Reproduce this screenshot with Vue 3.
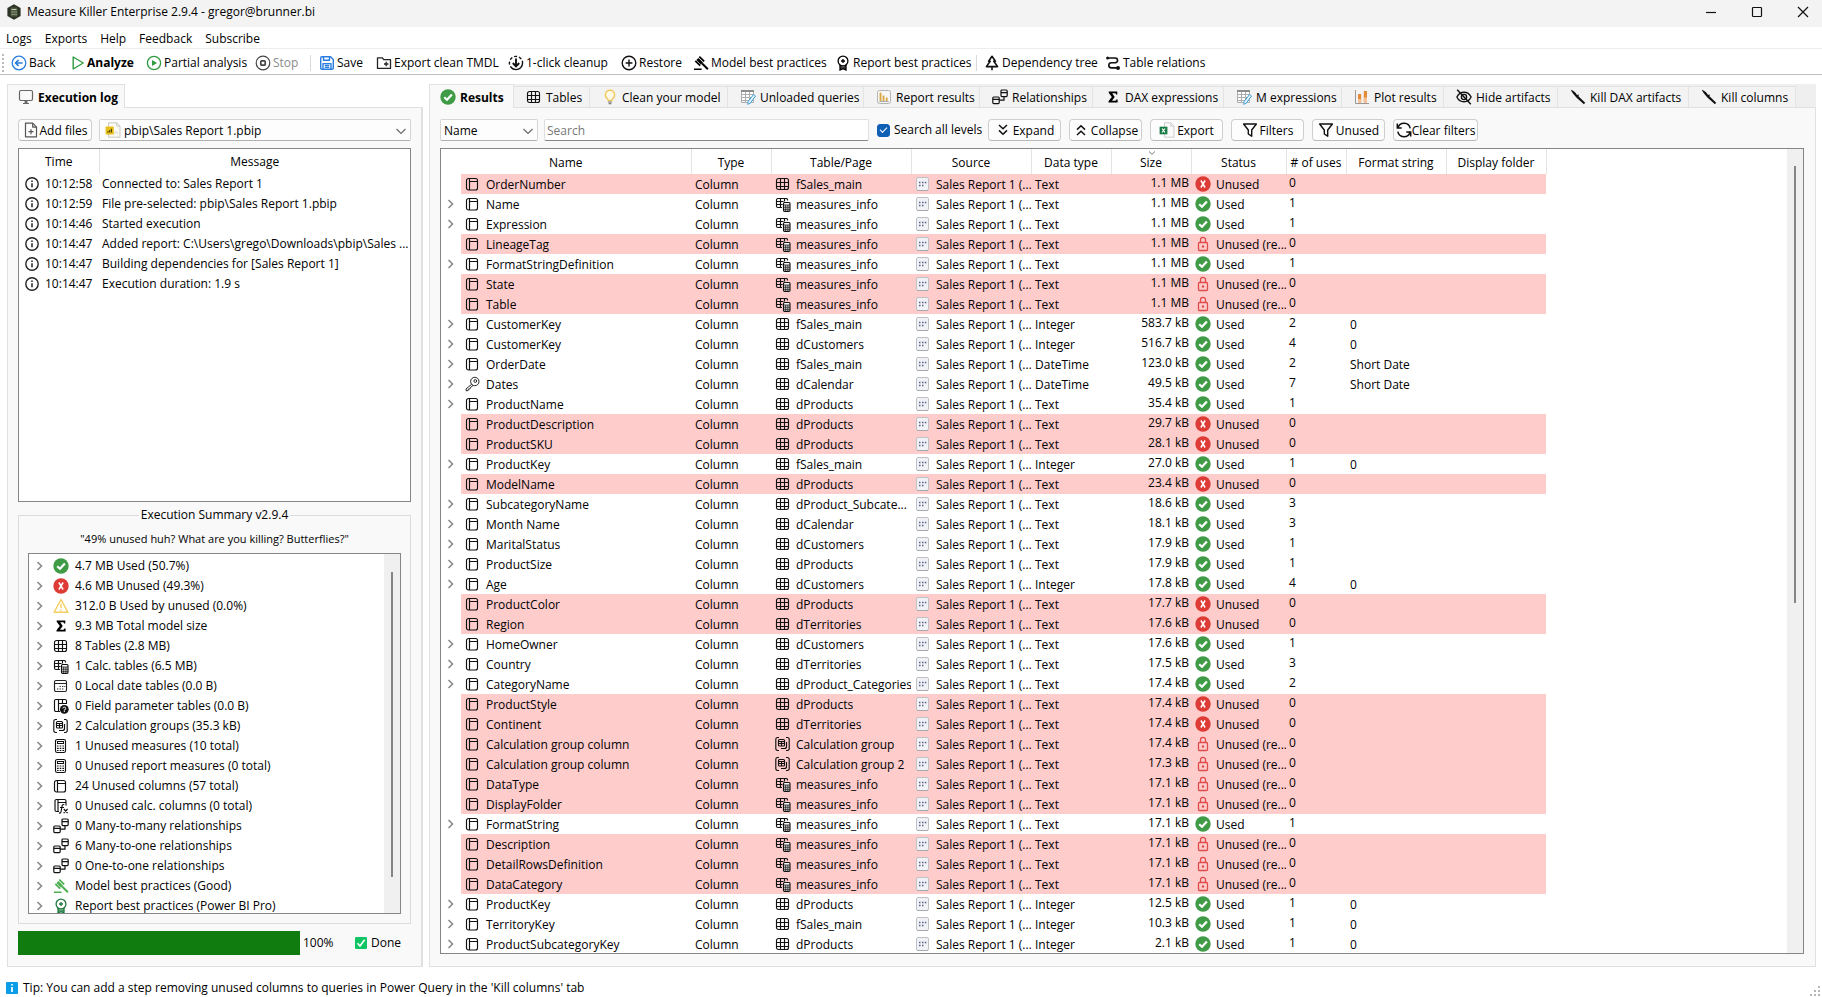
<script setup>
import { ref } from 'vue'

const menus = ['Logs', 'Exports', 'Help', 'Feedback', 'Subscribe']

const tools = [
  { id: 'back', label: 'Back' },
  { id: 'play', label: 'Analyze', bold: true },
  { id: 'playc', label: 'Partial analysis' },
  { id: 'stop', label: 'Stop', off: true },
  { id: 'save', label: 'Save', sep: true },
  { id: 'folder', label: 'Export clean TMDL' },
  { id: 'clean', label: '1-click cleanup' },
  { id: 'plus', label: 'Restore' },
  { id: 'gavel', label: 'Model best practices' },
  { id: 'badge', label: 'Report best practices' },
  { id: 'pine', label: 'Dependency tree', sep: true },
  { id: 'route', label: 'Table relations' }
]

const tabs = [
  ['ok', 'Results'], ['table', 'Tables'], ['bulb', 'Clean your model'], ['sheet', 'Unloaded queries'],
  ['chart', 'Report results'], ['rel', 'Relationships'], ['sigma', 'DAX expressions'], ['sheet', 'M expressions'],
  ['plot', 'Plot results'], ['hide', 'Hide artifacts'], ['knife', 'Kill DAX artifacts'], ['knife', 'Kill columns']
]

const log = [
  ['10:12:58', 'Connected to: Sales Report 1'],
  ['10:12:59', 'File pre-selected: pbip\\Sales Report 1.pbip'],
  ['10:14:46', 'Started execution'],
  ['10:14:47', 'Added report: C:\\Users\\grego\\Downloads\\pbip\\Sales ...'],
  ['10:14:47', 'Building dependencies for [Sales Report 1]'],
  ['10:14:47', 'Execution duration: 1.9 s']
]

const summary = [
  ['ok', '4.7 MB Used (50.7%)'],
  ['bad', '4.6 MB Unused (49.3%)'],
  ['warn', '312.0 B Used by unused (0.0%)'],
  ['sigma', '9.3 MB Total model size'],
  ['table', '8 Tables (2.8 MB)'],
  ['calctable', '1 Calc. tables (6.5 MB)'],
  ['date', '0 Local date tables (0.0 B)'],
  ['param', '0 Field parameter tables (0.0 B)'],
  ['group', '2 Calculation groups (35.3 kB)'],
  ['calc', '1 Unused measures (10 total)'],
  ['calc', '0 Unused report measures (0 total)'],
  ['column', '24 Unused columns (57 total)'],
  ['fx', '0 Unused calc. columns (0 total)'],
  ['rel', '0 Many-to-many relationships'],
  ['rel', '6 Many-to-one relationships'],
  ['rel', '0 One-to-one relationships'],
  ['gavel', 'Model best practices (Good)', 'lime'],
  ['badge', 'Report best practices (Power BI Pro)', 'forest']
]

const heads = ['Type', 'Table/Page', 'Source', 'Data type', 'Size', 'Status', '# of uses', 'Format string', 'Display folder']

const S = 'fSales_main', M = 'measures_info', C = 'dCustomers', P = 'dProducts', T = 'dTerritories', D = 'dCalendar'
const raw = [
  ['OrderNumber', S, 'Text', '1.1 MB', 'x', 0],
  ['Name', M, 'Text', '1.1 MB', 'u', 1],
  ['Expression', M, 'Text', '1.1 MB', 'u', 1],
  ['LineageTag', M, 'Text', '1.1 MB', 'l', 0],
  ['FormatStringDefinition', M, 'Text', '1.1 MB', 'u', 1],
  ['State', M, 'Text', '1.1 MB', 'l', 0],
  ['Table', M, 'Text', '1.1 MB', 'l', 0],
  ['CustomerKey', S, 'Integer', '583.7 kB', 'u', 2, '0'],
  ['CustomerKey', C, 'Integer', '516.7 kB', 'u', 4, '0'],
  ['OrderDate', S, 'DateTime', '123.0 kB', 'u', 2, 'Short Date'],
  ['Dates', D, 'DateTime', '49.5 kB', 'u', 7, 'Short Date'],
  ['ProductName', P, 'Text', '35.4 kB', 'u', 1],
  ['ProductDescription', P, 'Text', '29.7 kB', 'x', 0],
  ['ProductSKU', P, 'Text', '28.1 kB', 'x', 0],
  ['ProductKey', S, 'Integer', '27.0 kB', 'u', 1, '0'],
  ['ModelName', P, 'Text', '23.4 kB', 'x', 0],
  ['SubcategoryName', 'dProduct_Subcate...', 'Text', '18.6 kB', 'u', 3],
  ['Month Name', D, 'Text', '18.1 kB', 'u', 3],
  ['MaritalStatus', C, 'Text', '17.9 kB', 'u', 1],
  ['ProductSize', P, 'Text', '17.9 kB', 'u', 1],
  ['Age', C, 'Integer', '17.8 kB', 'u', 4, '0'],
  ['ProductColor', P, 'Text', '17.7 kB', 'x', 0],
  ['Region', T, 'Text', '17.6 kB', 'x', 0],
  ['HomeOwner', C, 'Text', '17.6 kB', 'u', 1],
  ['Country', T, 'Text', '17.5 kB', 'u', 3],
  ['CategoryName', 'dProduct_Categories', 'Text', '17.4 kB', 'u', 2],
  ['ProductStyle', P, 'Text', '17.4 kB', 'x', 0],
  ['Continent', T, 'Text', '17.4 kB', 'x', 0],
  ['Calculation group column', 'Calculation group', 'Text', '17.4 kB', 'l', 0],
  ['Calculation group column', 'Calculation group 2', 'Text', '17.3 kB', 'l', 0],
  ['DataType', M, 'Text', '17.1 kB', 'l', 0],
  ['DisplayFolder', M, 'Text', '17.1 kB', 'l', 0],
  ['FormatString', M, 'Text', '17.1 kB', 'u', 1],
  ['Description', M, 'Text', '17.1 kB', 'l', 0],
  ['DetailRowsDefinition', M, 'Text', '17.1 kB', 'l', 0],
  ['DataCategory', M, 'Text', '17.1 kB', 'l', 0],
  ['ProductKey', P, 'Integer', '12.5 kB', 'u', 1, '0'],
  ['TerritoryKey', S, 'Integer', '10.3 kB', 'u', 1, '0'],
  ['ProductSubcategoryKey', P, 'Integer', '2.1 kB', 'u', 1, '0']
]
const statusText = { u: 'Used', x: 'Unused', l: 'Unused (re...' }
const statusIcon = { u: 'ok', x: 'bad', l: 'lock' }
const rows = raw.map(([name, table, type, size, st, uses, fmt]) => ({
  name, table, type, size, uses, fmt: fmt || '',
  used: st === 'u',
  icon: name === 'Dates' ? 'key' : 'column',
  tableIcon: table === M ? 'calctable' : table.startsWith('Calc') ? 'group' : 'table',
  status: statusText[st],
  statusIcon: statusIcon[st]
}))

const search = ref('')
const allLevels = ref(true)
const progress = ref(100)
</script>

<template>
  <div class="window">
    <svg class="defs" aria-hidden="true">
      <symbol id="i-app" viewBox="0 0 16 16"><path d="M8 0.3 14.6 4v8L8 15.7 1.4 12V4z" fill="#2b3326" /><rect x="4.6" y="3.6" width="6.8" height="8.8" rx="1" fill="#4c5a40" /><path d="M5.6 5.5h4.8M5.6 8h1m1 0h1m1 0h1m-5 2.4h1m1 0h1m1 0h1" stroke="#c3cbb0" stroke-width="1" /></symbol>
      <symbol id="i-back" viewBox="0 0 16 16"><g fill="none" stroke="#2b7de0" stroke-width="1.3"><circle cx="8" cy="8" r="6.8" /><path d="M11.6 8H4.8M7.6 5 4.6 8l3 3" stroke-width="1.7" /></g></symbol>
      <symbol id="i-play" viewBox="0 0 16 16"><path d="M3.2 2 13.2 8 3.2 14z" fill="none" stroke="#2f9a3e" stroke-width="1.4" stroke-linejoin="round" /></symbol>
      <symbol id="i-playc" viewBox="0 0 16 16"><circle cx="8" cy="8" r="6.6" fill="none" stroke="#2f9a3e" stroke-width="1.3" /><path d="M6 4.9 11 8 6 11.1z" fill="#2f9a3e" /></symbol>
      <symbol id="i-stop" viewBox="0 0 16 16"><g fill="none" stroke="#444" stroke-width="1.2"><circle cx="8" cy="8" r="6.8" /><rect x="5.8" y="5.8" width="4.4" height="4.4" rx="1" stroke-width="1.7" /></g></symbol>
      <symbol id="i-save" viewBox="0 0 16 16"><g fill="none" stroke="#2b7de0" stroke-width="1.4" stroke-linejoin="round"><path d="M1.7 3a1.2 1.2 0 0 1 1.2-1.2h8.6l2.8 2.8V13a1.2 1.2 0 0 1-1.2 1.2H2.9A1.2 1.2 0 0 1 1.7 13z" /><path d="M4.5 1.8v3.4h6V1.8M4 14.2V8.6h8v5.6M5.8 10.5h4.4M5.8 12.4h4.4" /></g></symbol>
      <symbol id="i-folder" viewBox="0 0 16 16"><path d="M1.5 2.8h4.7l1.6 1.8h6.7v8.8h-13zM8 9h4.4M10.2 6.8v4.4" fill="none" stroke="#222" stroke-width="1.3" stroke-linejoin="round" /></symbol>
      <symbol id="i-clean" viewBox="0 0 16 16"><g fill="none" stroke="#111"><circle cx="8" cy="8" r="6.6" stroke-width="1.4" stroke-dasharray="17 2 3 2 3 2 3 2 3 2 2.5 0" /><path d="M8 3.6v7.6M4.8 8 8 11.4 11.2 8" stroke-width="1.9" /></g></symbol>
      <symbol id="i-plus" viewBox="0 0 16 16"><path d="M8 4.6v6.8M4.6 8h6.8M8 1.2a6.8 6.8 0 1 0 0 13.6A6.8 6.8 0 1 0 8 1.2z" fill="none" stroke="#111" stroke-width="1.4" /></symbol>
      <symbol id="i-gavel" viewBox="0 0 16 16"><g fill="currentColor"><path d="M6.9 1 11.8 5.8 10.6 7 5.7 2.2zM2.9 5.2 7.8 10 6.6 11.2 1.7 6.4z" /><path d="M5.4 2.9 10 7.4 7.9 9.5 3.4 5z" /><path d="M9.8 7.8 15.6 13.6 14.2 15 8.4 9.2zM1 13.4h7.6V15H1z" /></g></symbol>
      <symbol id="i-badge" viewBox="0 0 16 16"><g fill="none" stroke="currentColor" stroke-width="1.3"><circle cx="8" cy="6" r="4.9" /><path d="M5 10v5L8 13.6 11 15v-5" /><path d="M8 4v4M6 6h4" /></g><path d="M8 11.5 11 11v4l-3-1.3L5 15v-4z" fill="currentColor" opacity=".75" /></symbol>
      <symbol id="i-pine" viewBox="0 0 16 16"><path d="M8 1.3 4.6 6.2h1.6L2.4 11.6h11.2L9.8 6.2h1.6zM8 11.6v3.7" fill="none" stroke="#111" stroke-width="1.6" stroke-linejoin="round" /></symbol>
      <symbol id="i-route" viewBox="0 0 16 16"><path d="M3 3h7.2a2.3 2.3 0 0 1 0 4.7H6.400a2.500 2.500 0 0 0 0 5.200h5.400" fill="none" stroke="#111" stroke-width="1.600" /><circle cx="2.600" cy="3" r="1.500" fill="#111" /><circle cx="13" cy="12.900" r="2" fill="#111" /></symbol>
      <symbol id="i-monitor" viewBox="0 0 16 16"><rect x="1.500" y="1.500" width="13" height="10" rx="1.400" fill="none" stroke="#666" stroke-width="1.200" /><path d="M6.600 11.400h2.800V14H11v1H5v-1h1.600z" fill="#666" /></symbol>
      <symbol id="i-ok" viewBox="0 0 16 16"><circle cx="8" cy="8" r="7.700" fill="#3f9b46" /><path d="M4.200 8.200 7 10.800 11.900 5.400" fill="none" stroke="#fff" stroke-width="2.200" /></symbol>
      <symbol id="i-bad" viewBox="0 0 16 16"><circle cx="8" cy="8" r="7.700" fill="#dd3b36" /><path d="M5.900 4.500 10.100 11.500M10.100 4.500 5.900 11.500" stroke="#fff" stroke-width="1.500" /></symbol>
      <symbol id="i-lock" viewBox="0 0 16 16"><g fill="none" stroke="#df4b4b" stroke-width="1.300"><rect x="3.500" y="6.500" width="9" height="8" rx="1" /><path d="M5.500 6.500V3.800a2.500 2.500 0 0 1 5 0v2.700" /></g><circle cx="8" cy="10.500" r="1.200" fill="#df4b4b" /></symbol>
      <symbol id="i-warn" viewBox="0 0 16 16"><path d="M8 1.700 15 14.300H1z" fill="none" stroke="#f5cf63" stroke-width="1.400" stroke-linejoin="round" /><path d="M8 6v4M8 11.300v1.400" stroke="#f5cf63" stroke-width="1.500" /></symbol>
      <symbol id="i-sigma" viewBox="0 0 16 16"><path d="M3.700 2.500h8.600v3h-1.200l-.7-1.200H7.200L9.700 8 7 11.700h3.600l.8-1.300h1.200v3.100H3.500v-1.200L6.800 8 3.700 3.700z" fill="#000" /></symbol>
      <symbol id="i-table" viewBox="0 0 16 16"><path d="M3.500 2.500h8a2 2 0 0 1 2 2v7a2 2 0 0 1-2 2h-8a2 2 0 0 1-2-2v-7a2 2 0 0 1 2-2zM5.500 2.500v11M9.500 2.500v11M1.500 6.500h12M1.500 10.500h12" fill="none" stroke="#111" stroke-width="1.150" /></symbol>
      <symbol id="i-calctable" viewBox="0 0 16 16"><path d="M12.500 4.500V3.500A1.500 1.500 0 0 0 11 2.500H3A1.500 1.500 0 0 0 1.500 4v6A1.500 1.500 0 0 0 3 11.500h4M5.500 2.500v9M9.500 2.500v3M1.500 5.500h7M1.500 8.500h6" fill="none" stroke="#111" stroke-width="1.150" /><rect x="8.500" y="6.500" width="6.500" height="8.800" rx="1" fill="#fff" stroke="#111" stroke-width="1.150" /><path d="M8.500 9h6.500M8.500 11.200h6.500M8.500 13.300h6.500M10.700 9v6M12.900 9v6" stroke="#111" stroke-width=".8" /></symbol>
      <symbol id="i-column" viewBox="0 0 16 16"><path d="M3.500 2.500h7a2 2 0 0 1 2 2v7.500a2 2 0 0 1-2 2h-7a2 2 0 0 1-2-2V4.500a2 2 0 0 1 2-2zM4.500 2.500V14M4.500 5.500h8" fill="none" stroke="#111" stroke-width="1.150" /></symbol>
      <symbol id="i-key" viewBox="0 0 16 16"><g fill="none" stroke="#222" stroke-width="1"><path d="M6.700 8.200 1 13l.2 1.800 1.900-.2.400-1.500 1.500-.2.500-1.500 2.400-1.700" /><circle cx="9.800" cy="5.500" r="4.200" /><circle cx="10.300" cy="5" r="1.400" /></g></symbol>
      <symbol id="i-date" viewBox="0 0 16 16"><path d="M3 2.500h9A1.500 1.500 0 0 1 13.500 4v8a1.500 1.500 0 0 1-1.500 1.500H3A1.500 1.500 0 0 1 1.500 12V4A1.500 1.500 0 0 1 3 2.500zM1.500 5.500h12" fill="none" stroke="#222" stroke-width="1.150" /><path d="M6.500 8.500h1.300M9 8.500h1.300M11.300 8.500h1M4 11h1.300M6.500 11h1.300M9 11h1.300" stroke="#222" stroke-width="1.200" /></symbol>
      <symbol id="i-param" viewBox="0 0 16 16"><path d="M7 13.500H3A1.500 1.500 0 0 1 1.500 12V3A1.500 1.500 0 0 1 3 1.500h9A1.500 1.500 0 0 1 13.500 3v3M5.500 1.500v12M5.500 5.500h8M9.500 1.500v4" fill="none" stroke="#111" stroke-width="1.150" /><circle cx="11.300" cy="11.300" r="4.400" fill="#111" /><path d="M9.900 10.400a1.400 1.400 0 1 1 1.400 1.500v.6M11.300 13v1" fill="none" stroke="#fff" stroke-width="1" /></symbol>
      <symbol id="i-group" viewBox="0 0 16 16"><g fill="none" stroke="#111" stroke-width="1.150"><path d="M4 1.500H2.500A2 2 0 0 0 .8 3v10a2 2 0 0 0 1.700 1.500H4M11 1.500h1.500A2 2 0 0 1 14.200 3v10a2 2 0 0 1-1.700 1.500H11" /><rect x="3.500" y="3.500" width="6" height="6.500" rx="1" /><path d="M3.500 5.500h6M3.500 7.500h6M6.500 5.500V10M11.500 6v4.500a2 2 0 0 1-2 2H6" /></g></symbol>
      <symbol id="i-calc" viewBox="0 0 16 16"><g fill="none" stroke="#111"><rect x="2.500" y="1.500" width="10" height="13" rx="1.800" stroke-width="1.150" /><rect x="4.500" y="3.500" width="6" height="2" stroke-width="1" /><path d="M4 8h1.600M6.700 8h1.600M9.400 8h1.600M4 10.300h1.600M6.700 10.300h1.600M9.400 10.300h1.600M4 12.500h1.600M6.700 12.500h1.600M9.400 12.500h1.600" stroke-width="1.200" /></g></symbol>
      <symbol id="i-fx" viewBox="0 0 16 16"><g fill="none" stroke="#111" stroke-width="1.150"><path d="M6 13.500H3.500A1.500 1.500 0 0 1 2 12V3a1.500 1.500 0 0 1 1.500-1.500h8A1.500 1.500 0 0 1 13 3v4.500M5 1.500v12M5 4.500h8" /><path d="M11.200 6.600c-1.600-.5-2 .4-2.300 2.200l-.7 4.200c-.3 1.700-.8 2.400-2.200 1.900M7 9.500h4M10.800 11l3.800 4.200M14.600 11l-4 4.200" /></g></symbol>
      <symbol id="i-rel" viewBox="0 0 16 16"><g fill="none" stroke="#111" stroke-width="1.200"><rect x=".8" y="8" width="6.400" height="6.600" rx="1" /><path d="M.8 10.400h6.400M9 3.600h6.200M12 7.600v3.600H7.200" /><rect x="9" y="1" width="6.200" height="6.600" rx="1" /></g></symbol>
      <symbol id="i-bulb" viewBox="0 0 16 16"><path d="M8 1.200a4.600 4.600 0 0 0-2.700 8.300c.6.500.8 1.200.8 2h3.800c0-.8.200-1.500.8-2A4.600 4.600 0 0 0 8 1.200z" fill="#fffbe8" stroke="#f2c75c" stroke-width="1.300" /><path d="M6 13h4M6.700 14.700h2.600" stroke="#777" stroke-width="1.200" /></symbol>
      <symbol id="i-sheet" viewBox="0 0 16 16"><path d="M1.500 1.500h12v12h-12zM1.500 5.500h12M1.500 8.500h12M1.500 11.500h12M5.500 2v11.500M9.500 2v11.500" fill="#fff" stroke="#adadad" stroke-width="1" /><path d="M1 1h13v2H1z" fill="#8d8d8d" /><path d="M13.500 5.500 15.500 7 10.300 14.200 7.800 15.300 8 12.800z" fill="#e6f4fc" stroke="#3e9fd4" stroke-width="1" /></symbol>
      <symbol id="i-chart" viewBox="0 0 16 16"><rect x="1.500" y="1.500" width="13" height="13" rx="2" fill="#f7f7f7" stroke="#b3b3b3" stroke-width="1" /><path d="M4.500 3.500V12M7.500 6.500V12M10.700 8.500V12" stroke="#d8a53f" stroke-width="1.800" /><path d="M3.300 12.500h9.500" stroke="#aaa" stroke-width="1" /></symbol>
      <symbol id="i-plot" viewBox="0 0 16 16"><path d="M1.500 1v13.500H15" fill="none" stroke="#999" stroke-width="1" /><path d="M4 5h3.200v8.500H4zM9.800 2H13v11.500H9.800z" fill="#e58a38" /><path d="M4 10h3.200v3.500H4zM9.800 8.500H13v5H9.800z" fill="#f3c193" /></symbol>
      <symbol id="i-hide" viewBox="0 0 16 16"><g fill="none" stroke="#111" stroke-width="1.400"><path d="M.9 8C2.400 4.900 5 3.200 8 3.200s5.600 1.700 7.100 4.800c-1.500 3.100-4.100 4.800-7.100 4.800S2.400 11.100.9 8z" /><circle cx="8" cy="8" r="2.600" /><path d="M1.200.8 14.800 15.200" stroke-width="1.500" /></g></symbol>
      <symbol id="i-knife" viewBox="0 0 16 16"><path d="M.8.8c2.400.6 4.400 2.500 5.900 4.700L15.200 13.700 13.900 15.200 6.900 9C4.500 6.500 2.100 3.900.8.800z" fill="#111" /><path d="M6.800 7.400 8.600 5.700" stroke="#111" stroke-width="1.200" /></symbol>
      <symbol id="i-file" viewBox="0 0 16 16"><g fill="none" stroke="#555" stroke-width="1.200" stroke-linejoin="round"><path d="M2.500 1.200h7.200l3.800 3.900v9.700h-11z" /><path d="M9.700 1.200v3.900h3.800M8 7.200v5M5.500 9.700h5" /></g></symbol>
      <symbol id="i-pbip" viewBox="0 0 16 16"><path d="M3.500.8h8.200l3.300 3.300v11.100H3.500z" fill="#fbfbf6" stroke="#c4c4bc" stroke-width=".9" /><path d="M11.700.8v3.300H15" fill="none" stroke="#c4c4bc" stroke-width=".9" /><path d="M9.500 12l1.700-2.500 2.200 2.500" fill="none" stroke="#d7d7cf" stroke-width="1" /><rect x=".6" y="4.500" width="8.200" height="8" rx=".8" fill="#e8c01c" /><path d="M3 10.500V9M4.700 10.500V8M6.400 10.500V6.700" stroke="#4a3c00" stroke-width="1.100" /></symbol>
      <symbol id="i-info" viewBox="0 0 16 16"><g fill="none" stroke="#222" stroke-width="1.400"><circle cx="8" cy="8" r="6.200" /><path d="M8 7.200v4M8 4.600v1.400" stroke-width="1.500" /></g></symbol>
      <symbol id="i-src" viewBox="0 0 16 16"><rect x="1.500" y="1.500" width="12" height="13" rx="1.500" fill="#f1f2f6" stroke="#bfc1c7" stroke-width="1" /><path d="M2 14.500h11" stroke="#a7a9af" stroke-width="1" /><path d="M4 6.500h1.500M7 6.500h1.500M9.800 6.500h1.500M4 9.500h1.500M7 9.500h1.500" stroke="#5b5f8d" stroke-width="1.300" /></symbol>
      <symbol id="i-expand" viewBox="0 0 16 16"><path d="M4 3l4 3.800L12 3M4 8.400l4 3.800 4-3.800" fill="none" stroke="#111" stroke-width="1.500" /></symbol>
      <symbol id="i-collapse" viewBox="0 0 16 16"><path d="M4 7.600l4-3.800 4 3.800M4 13l4-3.800L12 13" fill="none" stroke="#111" stroke-width="1.500" /></symbol>
      <symbol id="i-excel" viewBox="0 0 16 16"><path d="M5.500.8h6.300l3.200 3.300v11.100H5.500z" fill="#fafafa" stroke="#c9c9c9" stroke-width=".9" /><path d="M11.800.8v3.300H15" fill="none" stroke="#c9c9c9" stroke-width=".9" /><rect x=".6" y="4.700" width="7.800" height="7.600" fill="#177a45" /><path d="M3 6.500l3 4M6 6.500l-3 4" stroke="#fff" stroke-width="1.200" /></symbol>
      <symbol id="i-funnel" viewBox="0 0 16 16"><path d="M1.600 2h12.800L9.700 8v6.200L6.300 12V8z" fill="none" stroke="#111" stroke-width="1.400" stroke-linejoin="round" /></symbol>
      <symbol id="i-refresh" viewBox="0 0 16 16"><path d="M1.300 1.600V6h4.400M2 5.800a6.300 6.300 0 0 1 12.200.6M14.700 14.400V10h-4.400M14 10.200a6.300 6.300 0 0 1-12.200-.6" fill="none" stroke="#111" stroke-width="1.500" /></symbol>
      <symbol id="i-done" viewBox="0 0 16 16"><rect x="2" y="2" width="12" height="12" rx="1.200" fill="#10c563" /><path d="M4.500 8.200 7 11 11.600 4.800" fill="none" stroke="#fff" stroke-width="1.600" /></symbol>
      <symbol id="i-tip" viewBox="0 0 16 16"><rect x="1" y="2" width="12" height="12" rx="1" fill="#0c9fe8" /><path d="M7 7v5M7 4v1.600" stroke="#fff" stroke-width="1.700" /></symbol>
      <symbol id="i-chev" viewBox="0 0 16 16"><path d="M5.500 4 9.500 8l-4 4" fill="none" stroke="#8a8a8a" stroke-width="1.600" /></symbol>
      <symbol id="i-down" viewBox="0 0 16 16"><path d="M3.500 6 8 10.500 12.500 6" fill="none" stroke="#666" stroke-width="1.100" /></symbol>
      <symbol id="i-min" viewBox="0 0 16 16"><path d="M3 8.500h10" stroke="#111" stroke-width="1.200" /></symbol>
      <symbol id="i-max" viewBox="0 0 16 16"><rect x="3.500" y="3.500" width="9" height="9" rx=".8" fill="none" stroke="#111" stroke-width="1.200" /></symbol>
      <symbol id="i-close" viewBox="0 0 16 16"><path d="M3 3l10 10M13 3 3 13" stroke="#111" stroke-width="1.200" /></symbol>
      <symbol id="i-grip" viewBox="0 0 16 16"><path d="M12 6h2v2h-2zM8 10h2v2H8zM12 10h2v2h-2zM4 14h2v2H4zM8 14h2v2H8zM12 14h2v2h-2z" fill="#b5b5b5" /></symbol>
    </svg>

    <header class="titlebar">
      <svg class="ic"><use href="#i-app" /></svg>
      <span class="title">Measure Killer Enterprise 2.9.4 - gregor@brunner.bi</span>
      <div class="winbtns">
        <button type="button" aria-label="Minimize"><svg class="ic"><use href="#i-min" /></svg></button>
        <button type="button" aria-label="Maximize"><svg class="ic"><use href="#i-max" /></svg></button>
        <button type="button" aria-label="Close"><svg class="ic"><use href="#i-close" /></svg></button>
      </div>
    </header>

    <nav class="menubar">
      <button v-for="m in menus" :key="m" type="button">{{ m }}</button>
    </nav>

    <div class="toolbar" role="toolbar">
      <span class="grip"></span>
      <template v-for="t in tools" :key="t.id">
        <span v-if="t.sep" class="sep"></span>
        <button type="button" :class="{ bold: t.bold }" :disabled="t.off">
          <svg class="ic"><use :href="'#i-' + t.id" /></svg>{{ t.label }}
        </button>
      </template>
    </div>

    <main class="content">
      <section class="side">
        <div class="side-tabs" role="tablist">
          <button class="side-tab" type="button" role="tab" aria-selected="true"><svg class="ic"><use href="#i-monitor" /></svg>Execution log</button>
        </div>
        <div class="side-body">
          <div class="filebar">
            <button class="btn add" type="button"><svg class="ic"><use href="#i-file" /></svg>Add files</button>
            <div class="combo file">
              <svg class="ic lead"><use href="#i-pbip" /></svg>
              <select aria-label="Report file"><option>pbip\Sales Report 1.pbip</option></select>
              <svg class="ic arrow"><use href="#i-down" /></svg>
            </div>
          </div>
          <div class="frame logframe">
            <table class="log">
              <colgroup><col class="c-time"><col></colgroup>
              <thead><tr><th>Time</th><th>Message</th></tr></thead>
              <tbody>
                <tr v-for="(l, i) in log" :key="i">
                  <td><span class="cell"><svg class="ic"><use href="#i-info" /></svg>{{ l[0] }}</span></td>
                  <td class="msg">{{ l[1] }}</td>
                </tr>
              </tbody>
            </table>
          </div>
          <fieldset class="summary">
            <legend>Execution Summary v2.9.4</legend>
            <p>"49% unused huh? What are you killing? Butterflies?"</p>
            <div class="frame treeframe">
              <ul>
                <li v-for="s in summary" :key="s[1]">
                  <svg class="ic"><use href="#i-chev" /></svg>
                  <svg class="ic" :class="s[2]"><use :href="'#i-' + s[0]" /></svg>
                  <span>{{ s[1] }}</span>
                </li>
              </ul>
              <div class="track"><div class="thumb"></div></div>
            </div>
          </fieldset>
          <div class="progressrow">
            <progress id="run" :value="progress" max="100"></progress>
            <label for="run">{{ progress }}%</label>
            <span class="done"><svg class="ic"><use href="#i-done" /></svg>Done</span>
          </div>
        </div>
      </section>

      <section class="mainpane">
        <div class="tabs" role="tablist">
          <button v-for="(t, i) in tabs" :key="t[1]" type="button" role="tab" :aria-selected="i === 0" :class="{ on: i === 0 }">
            <svg class="ic"><use :href="'#i-' + t[0]" /></svg>{{ t[1] }}
          </button>
        </div>
        <div class="main-body">
          <div class="filters">
            <div class="combo name">
              <select aria-label="Search field"><option>Name</option></select>
              <svg class="ic arrow"><use href="#i-down" /></svg>
            </div>
            <input v-model="search" class="search" type="text" placeholder="Search" aria-label="Search">
            <label class="check"><input v-model="allLevels" type="checkbox">Search all levels</label>
            <button class="btn" type="button"><svg class="ic"><use href="#i-expand" /></svg>Expand</button>
            <button class="btn" type="button"><svg class="ic"><use href="#i-collapse" /></svg>Collapse</button>
            <button class="btn" type="button"><svg class="ic"><use href="#i-excel" /></svg>Export</button>
            <button class="btn" type="button"><svg class="ic"><use href="#i-funnel" /></svg>Filters</button>
            <button class="btn" type="button"><svg class="ic"><use href="#i-funnel" /></svg>Unused</button>
            <button class="btn wide" type="button"><svg class="ic"><use href="#i-refresh" /></svg>Clear filters</button>
          </div>
          <div class="frame gridframe">
            <div class="gridwrap">
              <table class="grid">
                <colgroup>
                  <col class="w-exp"><col class="w-name"><col class="w-s"><col class="w-l"><col class="w-m"><col class="w-s">
                  <col class="w-s"><col class="w-status"><col class="w-uses"><col class="w-f"><col class="w-f">
                </colgroup>
                <thead>
                  <tr>
                    <th colspan="2">Name</th>
                    <th v-for="h in heads" :key="h">{{ h }}<svg v-if="h === 'Size'" class="sort" viewBox="0 0 8 4"><path d="M1 .5 4 3.300 7 .5" fill="none" stroke="#777" /></svg></th>
                  </tr>
                </thead>
                <tbody>
                  <tr v-for="(r, i) in rows" :key="i" :class="{ pink: !r.used }">
                    <td class="exp"><svg v-if="r.used" class="ic"><use href="#i-chev" /></svg></td>
                    <td><span class="cell"><svg class="ic"><use :href="'#i-' + r.icon" /></svg>{{ r.name }}</span></td>
                    <td>Column</td>
                    <td><span class="cell"><svg class="ic"><use :href="'#i-' + r.tableIcon" /></svg>{{ r.table }}</span></td>
                    <td><span class="cell"><svg class="ic"><use href="#i-src" /></svg>Sales Report 1 (...</span></td>
                    <td>{{ r.type }}</td>
                    <td class="num">{{ r.size }}</td>
                    <td><span class="cell"><svg class="ic"><use :href="'#i-' + r.statusIcon" /></svg>{{ r.status }}</span></td>
                    <td class="uses">{{ r.uses }}</td>
                    <td>{{ r.fmt }}</td>
                    <td></td>
                  </tr>
                </tbody>
              </table>
            </div>
            <div class="track"><div class="thumb"></div></div>
          </div>
        </div>
      </section>
    </main>

    <footer class="statusbar">
      <svg class="ic"><use href="#i-tip" /></svg>
      <span>Tip: You can add a step removing unused columns to queries in Power Query in the 'Kill columns' tab</span>
      <svg class="ic corner"><use href="#i-grip" /></svg>
    </footer>
  </div>
</template>

<style>
body { background: #fff; overflow: hidden; }
</style>

<style scoped>
* { box-sizing: border-box; }
.window {
  height: 100vh; display: flex; flex-direction: column;
  font: 12px/16px "Open Sans", "Noto Sans", sans-serif; color: #000; background: #fff;
  white-space: nowrap;
}
.defs { position: absolute; width: 0; height: 0; }
.ic { width: 16px; height: 16px; flex: none; display: block; }
button, input, select { font: inherit; color: inherit; margin: 0; padding: 0; border: 0; background: none; }
button { display: flex; align-items: center; white-space: nowrap; }

.titlebar { height: 27px; flex: none; display: flex; align-items: center; padding: 0 11px 4px 6px; background: #f3f3f3; gap: 5px; }
.winbtns { margin-left: auto; display: flex; gap: 30px; }

.menubar { height: 22px; flex: none; display: flex; align-items: center; gap: 13px; padding: 2px 6px 0; border-bottom: 1px solid #ededed; }

.toolbar {
  height: 26px; flex: none; display: grid; align-items: center; border-bottom: 1px solid #bdbdbd; padding: 2px 0 0 2px;
  grid-template-columns: 9px 59px 76px 109px 55px 9px 57px 132px 113px 72px 142px 141px 8px 121px 1fr;
}
.toolbar button { gap: 2px; }
.toolbar .bold { gap: 1px; font-weight: 700; }
.toolbar button:disabled { color: #8a8a8a; }
.sep { width: 1px; height: 16px; background: #d9d9d9; }
.grip { width: 2px; height: 18px; background: repeating-linear-gradient(#bbb 0 2px, transparent 2px 4px); }

.content { flex: 1; min-height: 0; display: flex; gap: 6px; padding: 9px 6px 0 7px; }
.side { width: 416px; flex: none; display: flex; flex-direction: column; }
.side-tabs { display: flex; }
.side-tab {
  height: 24px; padding: 2px 6px 0 10px; gap: 4px; font-weight: 700; background: #f9f9f9;
  border: 1px solid #e0e0e0; border-bottom: 0; margin-bottom: -1px; position: relative;
}
.side-tab .ic, .tabs .ic { margin-bottom: 2px; }
.side-body {
  flex: 1; min-height: 0; display: flex; flex-direction: column; background: #f9f9f9;
  border: 1px solid #e0e0e0; border-right-width: 2px; padding: 11px 10px;
}
.filebar { display: flex; gap: 7px; flex: none; }
.btn {
  height: 22px; width: 73px; justify-content: center; gap: 2px; background: #fdfdfd; padding-top: 1px;
  border: 1px solid #cfcfcf; border-bottom-color: #b9b9b9; border-radius: 4px; flex: none;
}
.btn .ic { margin-bottom: 2px; }
.btn.wide { width: 85px; gap: 0; }
.btn.add { width: 74px; gap: 1px; }
.combo { position: relative; height: 22px; display: flex; background: #fdfdfd; border: 1px solid #d5d5d5; border-bottom-color: #b0b0b0; border-radius: 2px; }
.combo select { flex: 1; appearance: none; outline: 0; padding: 1px 3px 0; }
.combo.file { flex: 1; }
.combo.file select { padding-left: 24px; }
.combo .lead { position: absolute; left: 5px; top: 2px; }
.combo .arrow { position: absolute; right: 1px; top: 3px; }
.combo.name { width: 98px; flex: none; margin-right: -2px; }

.frame { border: 1px solid #868686; background: #fff; }
.logframe { flex: none; height: 354px; margin-top: 7px; overflow: hidden; }
table { border-collapse: collapse; border-spacing: 0; table-layout: fixed; }
th, td { padding: 0; font-weight: 400; }
.log { width: 100%; }
.c-time { width: 80px; }
.log th { height: 25px; padding-top: 1px; }
.log th:first-child { border-right: 1px solid #e2e2e2; }
.log td { height: 20px; }
.log .cell { padding-left: 5px; gap: 5px; }
.log .msg { padding-left: 3px; overflow: hidden; }
.cell { display: flex; align-items: center; gap: 5px; }

.summary { flex: 1; min-height: 0; min-width: 0; margin: 5px 0 0; padding: 8px 9px 9px; border: 1px solid #dcdcdc; display: flex; flex-direction: column; }
.summary legend { margin: 0 auto; padding: 0 2px; }
.summary p { margin: 0 0 6px; text-align: center; font-size: 11px; line-height: 16px; }
.treeframe { flex: 1; min-height: 0; display: flex; overflow: hidden; }
.treeframe ul { flex: 1; min-height: 0; margin: 0; padding: 2px 0 0 3px; list-style: none; }
.treeframe li { height: 20px; display: flex; align-items: center; }
.treeframe li .ic + .ic { margin: 0 6px 0 5px; }
.lime { color: #4caf50; }
.forest { color: #1f7a3f; }
.track { width: 16px; flex: none; background: #f0f0f0; padding-left: 7px; }
.thumb { width: 2px; background: #858585; }
.treeframe .thumb { height: 305px; margin-top: 18px; }
.gridframe .thumb { height: 437px; margin-top: 17px; }

.progressrow { flex: none; display: flex; align-items: center; height: 24px; margin-top: 7px; }
progress { appearance: none; width: 282px; height: 24px; border: 0; background: #e6e6e6; display: block; margin-right: 3px; }
progress::-webkit-progress-bar { background: #e6e6e6; }
progress::-webkit-progress-value { background: #107c10; }
.done { display: flex; align-items: center; gap: 2px; margin-left: auto; margin-right: 10px; }

.mainpane { flex: 1; min-width: 0; display: flex; flex-direction: column; }
.tabs {
  height: 23px; flex: none; display: grid; align-items: end; background: #efefef;
  grid-template-columns: 85px 76px 138px 136px 116px 113px 131px 118px 102px 114px 131px 107px;
}
.tabs button { height: 21px; padding: 2px 0 0 12px; gap: 4px; background: #f3f3f3; border: 1px solid #e3e3e3; border-left: 0; border-bottom: 0; }
.tabs button.on { height: 24px; margin-bottom: -1px; padding-left: 10px; background: #f9f9f9; font-weight: 700; border-left: 1px solid #e3e3e3; position: relative; }
.main-body {
  flex: 1; min-height: 0; display: flex; flex-direction: column; background: #f9f9f9;
  border: 1px solid #e0e0e0; padding: 11px 11px 12px 10px;
}
.filters { display: flex; gap: 8px; flex: none; }
.search { width: 325px; height: 22px; background: #fff; border: 1px solid #e0e0e0; border-bottom-color: #868686; border-radius: 2px; padding: 1px 2px 0; outline: 0; }
.search::placeholder { color: #777; opacity: 1; }
.check { display: flex; align-items: center; gap: 4px; width: 103px; }
.check input { appearance: none; width: 13px; height: 13px; border-radius: 3px; flex: none; border: 1px solid #868686; display: grid; place-items: center; }
.check input:checked { background: #0f5fb5; border-color: #0f5fb5; }
.check input:checked::after { content: ""; width: 6px; height: 3px; margin-bottom: 2px; border: solid #fff; border-width: 0 0 1px 1px; transform: rotate(-45deg); }

.gridframe { flex: 1; min-height: 0; margin-top: 7px; display: flex; overflow: hidden; }
.gridwrap { flex: 1; min-width: 0; overflow: hidden; }
.grid { width: 1105px; }
.w-exp { width: 20px; }
.w-name { width: 230px; }
.w-s { width: 80px; }
.w-l { width: 140px; }
.w-m { width: 120px; }
.w-status { width: 95px; }
.w-uses { width: 60px; }
.w-f { width: 100px; }
.grid th { height: 25px; padding-top: 2px; border-right: 1px solid #e4e4e4; position: relative; }
.sort { position: absolute; left: 36px; top: 2px; width: 8px; height: 4px; }
.grid td { height: 20px; padding: 2px 0 0 4px; overflow: hidden; }
.grid td.exp { padding: 0 0 0 2px; }
.grid .cell { height: 18px; }
.grid .cell .ic { margin-bottom: 2px; }
.grid .pink td:not(.exp) { background: #ffcccc; }
.grid td.num { text-align: right; padding: 0 2px 3px 0; }
.grid td.uses { padding: 0 0 3px 3px; }

.statusbar { height: 30px; flex: none; display: flex; align-items: center; gap: 2px; padding: 12px 0 0 5px; }
.corner { margin-left: auto; }
</style>
